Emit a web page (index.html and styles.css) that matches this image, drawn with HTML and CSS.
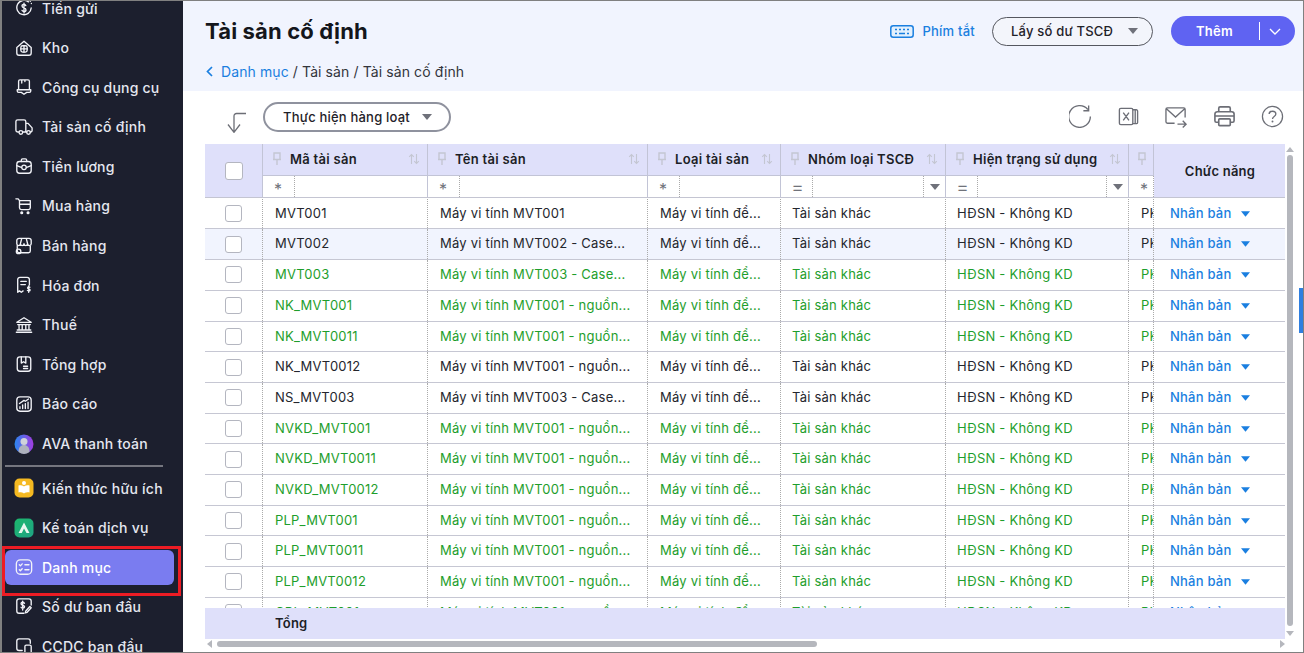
FILE: index.html
```html
<!DOCTYPE html>
<html lang="vi">
<head>
<meta charset="utf-8">
<title>Tài sản cố định</title>
<link rel="stylesheet" href="styles.css">
</head>
<body>
<svg class="defs" width="0" height="0" aria-hidden="true">
  <symbol id="pin" viewBox="0 0 10 14"><path d="M2 1h6v6.500H2zM1 7.500h8M5 8v5" fill="none" stroke="currentColor" stroke-width="1.400"/></symbol>
  <symbol id="sort" viewBox="0 0 12 12"><path d="M3.5 11V1.5M1.2 3.8 3.5 1.5l2.3 2.3M8.5 1v9.5M6.2 8.2l2.3 2.3 2.3-2.3" fill="none" stroke="currentColor" stroke-width="1.1"/></symbol>
  <symbol id="caret" viewBox="0 0 10 6"><path d="M0 0h10L5 6z" fill="currentColor"/></symbol>
</svg>
<div class="window">
  <aside class="sidebar">
    <nav class="menu">
      <a class="item"><svg class="ico" viewBox="0 0 20 20"><path d="M15 3.200A8 8 0 1 0 18 10"/><path d="M17 2.500v.01M18.200 5v.01"/><path d="M12 7.300C11.500 6.500 10.800 6 10 6c-1.200 0-2.200.7-2.200 1.900 0 2.600 4.400 1.500 4.400 4.200 0 1.200-1 1.900-2.200 1.900-.9 0-1.700-.5-2.200-1.300M10 4.500v11"/></svg>Tiền gửi</a>
      <a class="item"><svg class="ico" viewBox="0 0 20 20"><path d="M2 9.500 10 2.500l8 7v6a2.500 2.500 0 0 1-2.500 2.500h-11A2.500 2.500 0 0 1 2 15.500z"/><rect x="6.500" y="7.500" width="7" height="7" rx="2"/><path d="M10 7.500v7M6.500 11h7"/></svg>Kho</a>
      <a class="item"><svg class="ico" viewBox="0 0 20 20"><path d="M4 13V3.500A1.500 1.500 0 0 1 5.500 2h9A1.500 1.500 0 0 1 16 3.500V13M2.500 13h15v1.500a1.500 1.500 0 0 1-1.500 1.500h-3l-3 2-3-2H4a1.500 1.500 0 0 1-1.500-1.500zM7.500 2v3.500M11 2v2"/></svg>Công cụ dụng cụ</a>
      <a class="item"><svg class="ico" viewBox="0 0 20 20"><path d="M4 15.500H3a2 2 0 0 1-2-2V4a2 2 0 0 1 2-2h7a2 2 0 0 1 2 2v11.500H9M12 6h2.500l4.500 5v3a1.500 1.500 0 0 1-1.500 1.500H17M12 15.500h1"/><circle cx="6.500" cy="16" r="2"/><circle cx="15" cy="16" r="2"/></svg>Tài sản cố định</a>
      <a class="item"><svg class="ico" viewBox="0 0 20 20"><rect x="2" y="5" width="16" height="13" rx="3"/><path d="M7 5V3.500A1.500 1.500 0 0 1 8.500 2h3A1.500 1.500 0 0 1 13 3.500V5M2 9.500l5 2M18 9.500l-5 2"/><circle cx="10" cy="11.500" r="2.500"/></svg>Tiền lương</a>
      <a class="item"><svg class="ico" viewBox="0 0 20 20"><path d="M1 2h2.500l1.500 2h12v8a2 2 0 0 1-2 2H7a2 2 0 0 1-2-2V4M5 8h12"/><circle cx="7.500" cy="17.500" r="1" fill="currentColor"/><circle cx="14.500" cy="17.500" r="1" fill="currentColor"/></svg>Mua hàng</a>
      <a class="item"><svg class="ico" viewBox="0 0 20 20"><path d="M2.500 9v6.500a2 2 0 0 0 2 2H15a2 2 0 0 0 2-2V9M4.500 1.500h11A2.500 2.500 0 0 1 18 4v3.500a2 2 0 0 1-4 0 2 2 0 0 1-4 0 2 2 0 0 1-4 0 2 2 0 0 1-4 0V4a2.500 2.500 0 0 1 2.500-2.500zM7.500 1.500 6 7.500M12.500 1.500l1.500 6"/><circle cx="4" cy="16" r="2.500"/></svg>Bán hàng</a>
      <a class="item"><svg class="ico" viewBox="0 0 20 20"><path d="M3 18V4a2.500 2.500 0 0 1 2.500-2.500h8A2.500 2.500 0 0 1 16 4v6M3 18l2-1.500 2 1.500 2-1.500M6.500 6h6M6.500 9.500h5"/><path d="M16.500 12.500c-.5-.5-2.500-.7-2.500.7s2.800.8 2.800 2.300c0 1.400-2.300 1.300-3 .5M15.200 11v7"/></svg>Hóa đơn</a>
      <a class="item"><svg class="ico" viewBox="0 0 20 20"><path d="M2 7 10 2l8 5zM3 9.500h14M4.500 9.500v6M8 9.500v6M12 9.500v6M15.500 9.500v6M2.500 15.500h15M1.500 18h17"/></svg>Thuế</a>
      <a class="item"><svg class="ico" viewBox="0 0 20 20"><rect x="2.500" y="2" width="15" height="16" rx="3"/><path d="M7 2v7l2.500-1.500L12 9V2M9.500 12.500h4.500M9.500 15h4.500"/></svg>Tổng hợp</a>
      <a class="item"><svg class="ico" viewBox="0 0 20 20"><rect x="2" y="2" width="16" height="16" rx="3.500"/><path d="M5.500 15v-2M8.500 15v-4M11.500 15V9.500M14.500 15V8M5 9.500 10 6l1.500 1L15 4.500"/></svg>Báo cáo</a>
      <a class="item"><svg class="ico ico-lg" viewBox="0 0 20 20"><defs><linearGradient id="ava" x1="0" x2="1"><stop offset="0" stop-color="#2a86ef"/><stop offset="1" stop-color="#a23ce0"/></linearGradient></defs><circle cx="10" cy="10" r="9.500" fill="url(#ava)" stroke="none"/><circle cx="10" cy="7.500" r="3.500" fill="#cfd2da" stroke="none"/><path d="M4.500 18c0-5 2.500-7 5.500-7s5.500 2 5.500 7a9.500 9.500 0 0 1-11 0z" fill="#aeb2bd" stroke="none"/></svg>AVA thanh toán</a>
      <hr class="rule">
      <a class="item"><svg class="ico ico-lg" viewBox="0 0 20 20"><rect width="19" height="19" x=".5" y=".5" rx="5" fill="#f5b921" stroke="none"/><path d="M10 8.500C8 7.300 6 7.200 4.500 7.500v7c1.500-.3 3.500-.2 5.500 1 2-1.200 4-1.300 5.500-1v-7c-1.500-.3-3.500-.2-5.500 1z" fill="#fff" stroke="none"/><circle cx="10" cy="5" r="2" fill="#fff" stroke="none"/></svg>Kiến thức hữu ích</a>
      <a class="item"><svg class="ico ico-lg" viewBox="0 0 20 20"><defs><linearGradient id="ktdv" x1="0" x2="1" y2="1"><stop offset="0" stop-color="#1cb86c"/><stop offset="1" stop-color="#1fa384"/></linearGradient></defs><rect width="19" height="19" x=".5" y=".5" rx="5" fill="url(#ktdv)" stroke="none"/><path d="M4.500 15 10 4.500 15.500 15h-3L10 10.500 7.800 15z" fill="#e9f7ef" stroke="none"/></svg>Kế toán dịch vụ</a>
      <a class="item is-active"><svg class="ico" viewBox="0 0 20 20"><rect x="1.500" y="2" width="17" height="16" rx="4.500"/><path d="M4.800 7.500 6 8.700l2-2.200M4.800 13l1.200 1.200 2-2.200M11 7.500h4.500M11 13h4.500"/></svg>Danh mục</a>
      <a class="item"><svg class="ico" viewBox="0 0 20 20"><path d="M18 9V4.500A2.500 2.500 0 0 0 15.500 2h-11A2.500 2.500 0 0 0 2 4.500v11A2.500 2.500 0 0 0 4.500 18H10"/><path d="M10.500 7c-.5-.8-1.100-1.200-1.900-1.200-1.100 0-1.900.6-1.900 1.600 0 2.200 3.900 1.300 3.900 3.500 0 1-.9 1.600-2 1.600-.8 0-1.500-.4-1.900-1.100M8.500 4.500v10M18 12l-4.500 5-2 .5.500-2 4.500-5z"/></svg>Số dư ban đầu</a>
      <a class="item"><svg class="ico" viewBox="0 0 20 20"><path d="M8 15H4.500A2.500 2.500 0 0 1 2 12.500v-8A2.500 2.500 0 0 1 4.500 2h10A2.500 2.500 0 0 1 17 4.500V7M6 18h3"/><rect x="11" y="9" width="7" height="9" rx="1.500"/></svg>CCDC ban đầu</a>
    </nav>
    <div class="mark"></div>
  </aside>

  <main class="main">
    <header class="band">
      <div class="band-top">
        <h1 class="title">Tài sản cố định</h1>
        <div class="actions">
          <a class="shortcut"><svg class="kbd" viewBox="0 0 24 13"><rect x=".8" y=".8" width="22.400" height="11.400" rx="2.500" fill="#e3f0fd" stroke="currentColor" stroke-width="1.500"/><path d="M5 4.500h2M9 4.500h2M13 4.500h2M17 4.500h2M5 8.500h2M9 8.500h6M17 8.500h2" stroke="currentColor" stroke-width="1.300"/></svg>Phím tắt</a>
          <button class="pill pill-dark">Lấy số dư TSCĐ<svg class="caret-sm"><use href="#caret"/></svg></button>
          <div class="add"><span class="add-label">Thêm</span><span class="add-arrow"><svg viewBox="0 0 12 7"><path d="M1 1l5 5 5-5" fill="none" stroke="currentColor" stroke-width="1.300"/></svg></span></div>
        </div>
      </div>
      <div class="crumbs"><svg class="crumb-back" viewBox="0 0 7 11"><path d="M6 1 1.500 5.500 6 10" fill="none" stroke="currentColor" stroke-width="1.700"/></svg><a class="crumb-link">Danh mục</a> / Tài sản / Tài sản cố định</div>
    </header>

    <section class="toolbar">
      <svg class="batch-arrow" viewBox="0 0 20 21"><path d="M19 1.500H9.500A2.500 2.500 0 0 0 7 4v16M1 12.500 7 20.300l6-7.800" fill="none" stroke="currentColor" stroke-width="1.300"/></svg>
      <button class="pill pill-batch">Thực hiện hàng loạt<svg class="caret-sm"><use href="#caret"/></svg></button>
      <div class="tools">
        <svg class="tool" viewBox="1 0 24 24"><path d="M20.660 4.740A11.300 11.300 0 1 0 23.300 12M21.500 .5V6H16" fill="none" stroke="currentColor" stroke-width="1.400"/></svg>
        <svg class="tool" viewBox="0 0 24 24"><rect x="2.500" y="3.500" width="14" height="17" rx="1.500" fill="none" stroke="currentColor" stroke-width="1.400"/><path d="M16.500 5h4A1.200 1.200 0 0 1 21.500 6.200v12a1.200 1.200 0 0 1-1 1.200h-4M19 5v14.500M6.500 8l6 8M12.500 8l-6 8" fill="none" stroke="currentColor" stroke-width="1.400"/></svg>
        <svg class="tool" viewBox="1 0 24 24"><path d="M11 19H3.500A1.500 1.500 0 0 1 2 17.500v-13A1.500 1.500 0 0 1 3.500 3h17A1.500 1.500 0 0 1 22 4.500V13M2.500 4 12 12.500 21.500 4M14 20h9M19.500 16.500 23 20l-3.500 3.500" fill="none" stroke="currentColor" stroke-width="1.400"/></svg>
        <svg class="tool" viewBox="0 0 24 24"><path d="M6 7V3.500A1.500 1.500 0 0 1 7.500 2h9A1.500 1.500 0 0 1 18 3.500V7M6 18H3.500A1.500 1.500 0 0 1 2 16.500v-7A2.500 2.500 0 0 1 4.500 7h15A2.500 2.500 0 0 1 22 9.500v7a1.500 1.500 0 0 1-1.500 1.500H18M2 11.500h20" fill="none" stroke="currentColor" stroke-width="1.700"/><rect x="6" y="14.500" width="12" height="7" rx="1" fill="none" stroke="currentColor" stroke-width="1.700"/></svg>
        <svg class="tool" viewBox="0 0 24 24"><circle cx="12" cy="12" r="10.500" fill="none" stroke="currentColor" stroke-width="1.300"/><path d="M8.500 9.500C8.500 7.500 10 6.500 12 6.500s3.500 1.200 3.500 3c0 2.500-3.500 2.500-3.500 5" fill="none" stroke="currentColor" stroke-width="1.400"/><circle cx="12" cy="17.300" r="1" fill="currentColor"/></svg>
      </div>
    </section>

    <section class="table-area">
      <div class="table">
        <div class="thead">
          <div class="th th-check"><span class="box box-head"></span></div>
          <div class="th"><svg class="pin"><use href="#pin"/></svg><b class="th-label">Mã tài sản</b><svg class="sort"><use href="#sort"/></svg></div>
          <div class="th"><svg class="pin"><use href="#pin"/></svg><b class="th-label">Tên tài sản</b><svg class="sort"><use href="#sort"/></svg></div>
          <div class="th"><svg class="pin"><use href="#pin"/></svg><b class="th-label">Loại tài sản</b><svg class="sort"><use href="#sort"/></svg></div>
          <div class="th"><svg class="pin"><use href="#pin"/></svg><b class="th-label">Nhóm loại TSCĐ</b><svg class="sort"><use href="#sort"/></svg></div>
          <div class="th"><svg class="pin"><use href="#pin"/></svg><b class="th-label">Hiện trạng sử dụng</b><svg class="sort"><use href="#sort"/></svg></div>
          <div class="th th-narrow"><svg class="pin"><use href="#pin"/></svg></div>
          <div class="th th-fn">Chức năng</div>
          <div class="tf"><span class="op">*</span></div>
          <div class="tf"><span class="op">*</span></div>
          <div class="tf"><span class="op">*</span></div>
          <div class="tf"><span class="op op-eq">=</span><span class="tf-fill"></span><span class="tf-drop"><svg class="caret-sm"><use href="#caret"/></svg></span></div>
          <div class="tf"><span class="op op-eq">=</span><span class="tf-fill"></span><span class="tf-drop"><svg class="caret-sm"><use href="#caret"/></svg></span></div>
          <div class="tf tf-narrow"><span class="op">*</span></div>
        </div>
        <div class="tbody">
          <div class="row"><div class="td td-check"><span class="box"></span></div><div class="td">MVT001</div><div class="td">Máy vi tính MVT001</div><div class="td">Máy vi tính để...</div><div class="td td-tight">Tài sản khác</div><div class="td td-tight">HĐSN - Không KD</div><div class="td td-clip">PKT</div><div class="td-fn">Nhân bản<svg class="fn-caret"><use href="#caret"/></svg></div></div>
          <div class="row is-hover"><div class="td td-check"><span class="box"></span></div><div class="td">MVT002</div><div class="td">Máy vi tính MVT002 - Case...</div><div class="td">Máy vi tính để...</div><div class="td td-tight">Tài sản khác</div><div class="td td-tight">HĐSN - Không KD</div><div class="td td-clip">PKT</div><div class="td-fn">Nhân bản<svg class="fn-caret"><use href="#caret"/></svg></div></div>
          <div class="row is-green"><div class="td td-check"><span class="box"></span></div><div class="td">MVT003</div><div class="td">Máy vi tính MVT003 - Case...</div><div class="td">Máy vi tính để...</div><div class="td td-tight">Tài sản khác</div><div class="td td-tight">HĐSN - Không KD</div><div class="td td-clip">PKT</div><div class="td-fn">Nhân bản<svg class="fn-caret"><use href="#caret"/></svg></div></div>
          <div class="row is-green"><div class="td td-check"><span class="box"></span></div><div class="td">NK_MVT001</div><div class="td">Máy vi tính MVT001 - nguồn...</div><div class="td">Máy vi tính để...</div><div class="td td-tight">Tài sản khác</div><div class="td td-tight">HĐSN - Không KD</div><div class="td td-clip">PKT</div><div class="td-fn">Nhân bản<svg class="fn-caret"><use href="#caret"/></svg></div></div>
          <div class="row is-green"><div class="td td-check"><span class="box"></span></div><div class="td">NK_MVT0011</div><div class="td">Máy vi tính MVT001 - nguồn...</div><div class="td">Máy vi tính để...</div><div class="td td-tight">Tài sản khác</div><div class="td td-tight">HĐSN - Không KD</div><div class="td td-clip">PKT</div><div class="td-fn">Nhân bản<svg class="fn-caret"><use href="#caret"/></svg></div></div>
          <div class="row"><div class="td td-check"><span class="box"></span></div><div class="td">NK_MVT0012</div><div class="td">Máy vi tính MVT001 - nguồn...</div><div class="td">Máy vi tính để...</div><div class="td td-tight">Tài sản khác</div><div class="td td-tight">HĐSN - Không KD</div><div class="td td-clip">PKT</div><div class="td-fn">Nhân bản<svg class="fn-caret"><use href="#caret"/></svg></div></div>
          <div class="row"><div class="td td-check"><span class="box"></span></div><div class="td">NS_MVT003</div><div class="td">Máy vi tính MVT003 - Case...</div><div class="td">Máy vi tính để...</div><div class="td td-tight">Tài sản khác</div><div class="td td-tight">HĐSN - Không KD</div><div class="td td-clip">PKT</div><div class="td-fn">Nhân bản<svg class="fn-caret"><use href="#caret"/></svg></div></div>
          <div class="row is-green"><div class="td td-check"><span class="box"></span></div><div class="td">NVKD_MVT001</div><div class="td">Máy vi tính MVT001 - nguồn...</div><div class="td">Máy vi tính để...</div><div class="td td-tight">Tài sản khác</div><div class="td td-tight">HĐSN - Không KD</div><div class="td td-clip">PKT</div><div class="td-fn">Nhân bản<svg class="fn-caret"><use href="#caret"/></svg></div></div>
          <div class="row is-green"><div class="td td-check"><span class="box"></span></div><div class="td">NVKD_MVT0011</div><div class="td">Máy vi tính MVT001 - nguồn...</div><div class="td">Máy vi tính để...</div><div class="td td-tight">Tài sản khác</div><div class="td td-tight">HĐSN - Không KD</div><div class="td td-clip">PKT</div><div class="td-fn">Nhân bản<svg class="fn-caret"><use href="#caret"/></svg></div></div>
          <div class="row is-green"><div class="td td-check"><span class="box"></span></div><div class="td">NVKD_MVT0012</div><div class="td">Máy vi tính MVT001 - nguồn...</div><div class="td">Máy vi tính để...</div><div class="td td-tight">Tài sản khác</div><div class="td td-tight">HĐSN - Không KD</div><div class="td td-clip">PKT</div><div class="td-fn">Nhân bản<svg class="fn-caret"><use href="#caret"/></svg></div></div>
          <div class="row is-green"><div class="td td-check"><span class="box"></span></div><div class="td">PLP_MVT001</div><div class="td">Máy vi tính MVT001 - nguồn...</div><div class="td">Máy vi tính để...</div><div class="td td-tight">Tài sản khác</div><div class="td td-tight">HĐSN - Không KD</div><div class="td td-clip">PKT</div><div class="td-fn">Nhân bản<svg class="fn-caret"><use href="#caret"/></svg></div></div>
          <div class="row is-green"><div class="td td-check"><span class="box"></span></div><div class="td">PLP_MVT0011</div><div class="td">Máy vi tính MVT001 - nguồn...</div><div class="td">Máy vi tính để...</div><div class="td td-tight">Tài sản khác</div><div class="td td-tight">HĐSN - Không KD</div><div class="td td-clip">PKT</div><div class="td-fn">Nhân bản<svg class="fn-caret"><use href="#caret"/></svg></div></div>
          <div class="row is-green"><div class="td td-check"><span class="box"></span></div><div class="td">PLP_MVT0012</div><div class="td">Máy vi tính MVT001 - nguồn...</div><div class="td">Máy vi tính để...</div><div class="td td-tight">Tài sản khác</div><div class="td td-tight">HĐSN - Không KD</div><div class="td td-clip">PKT</div><div class="td-fn">Nhân bản<svg class="fn-caret"><use href="#caret"/></svg></div></div>
          <div class="row is-green"><div class="td td-check"><span class="box"></span></div><div class="td">CBL_MVT001</div><div class="td">Máy vi tính MVT001 - nguồn...</div><div class="td">Máy vi tính để...</div><div class="td td-tight">Tài sản khác</div><div class="td td-tight">HĐSN - Không KD</div><div class="td td-clip">PKT</div><div class="td-fn">Nhân bản<svg class="fn-caret"><use href="#caret"/></svg></div></div>
        </div>
        <div class="tfoot"><b class="tfoot-label">Tổng</b></div>
      </div>
      <div class="vscroll">
        <svg class="sb-arrow" viewBox="0 0 8 5"><path d="M4 0l4 5H0z" fill="currentColor"/></svg>
        <div class="vthumb"></div>
        <svg class="sb-arrow" viewBox="0 0 8 5"><path d="M0 0h8L4 5z" fill="currentColor"/></svg>
      </div>
    </section>
    <div class="hscroll">
      <svg class="sb-arrow-h" viewBox="0 0 5 8"><path d="M5 0v8L0 4z" fill="currentColor"/></svg>
      <div class="htrack"><div class="hthumb"></div></div>
      <svg class="sb-arrow-h" viewBox="0 0 5 8"><path d="M0 0v8l5-4z" fill="currentColor"/></svg>
    </div>
    <div class="edge-tab"></div>
  </main>
</div>
</body>
</html>
```
FILE: styles.css
```css
* { box-sizing: border-box; }
html, body { margin: 0; height: 100%; overflow: hidden; }
body { font-family: Inter, "Noto Sans", sans-serif; font-size: 13px; letter-spacing: .22px; color: #1f2229; background: #fff; }
.defs { position: absolute; }

.window {
  display: flex;
  width: 1304px;
  height: 653px;
  border: solid #808080;
  border-width: 1px 1px 1px 2px;
  background: #fff;
  overflow: hidden;
}

/* sidebar */
.sidebar { position: relative; flex: 0 0 181px; background: #1c1f2e; overflow: hidden; }
.menu { margin-top: -12.8px; padding: 0 0 0 3px; display: flex; flex-direction: column; }
.item {
  display: flex;
  align-items: center;
  gap: 9px;
  height: 39.6px;
  flex: none;
  width: 169px;
  padding-left: 10px;
  color: #e5e7f0;
  font-size: 14px;
  font-weight: 500;
  white-space: nowrap;
}
.ico { flex: none; width: 18px; height: 18px; fill: none; stroke: currentColor; stroke-width: 1.500; stroke-linecap: round; stroke-linejoin: round; color: #f2f3f8; }
.ico-lg { width: 20px; height: 20px; margin-left: -1px; margin-right: -1px; }
.rule { flex: none; width: 158px; height: 2px; margin: 1.200px 0 1.800px; border: 0; background: #75767f; }
.item.is-active { height: 35px; margin: 2.300px 0 1.900px; background: #7a7cf0; border-radius: 6px; color: #fff; }
.mark { position: absolute; left: 0; top: 545px; width: 179px; height: 50px; border: 3px solid #ed1c24; }

/* header band */
.main { position: relative; flex: 1; min-width: 0; display: flex; flex-direction: column; background: #fff; }
.band { flex: 0 0 90px; padding: 15px 8px 0 22px; background: #f1f4fe; }
.band-top { display: flex; align-items: center; justify-content: space-between; height: 30px; }
.title { margin: 0; font-size: 22px; font-weight: 700; letter-spacing: .15px; color: #14161c; line-height: 30px; }
.actions { display: flex; align-items: center; }
.shortcut { display: flex; align-items: center; gap: 8px; margin-right: 17px; color: #1a7fe0; font-weight: 500; }
.kbd { width: 24px; height: 13px; }
.pill {
  display: flex;
  align-items: center;
  justify-content: space-between;
  font: 500 13px Inter, sans-serif;
  letter-spacing: .2px;
  color: #1f2229;
  background: transparent;
  cursor: pointer;
}
.pill-dark { width: 161px; height: 29px; margin-right: 18px; padding: 0 14px 0 18px; border: 1px solid #55575f; border-radius: 15px; background: #f3f5fb; }
.caret-sm { width: 10px; height: 6px; color: #6f717a; }
.add { display: flex; align-items: center; width: 124px; height: 30px; background: #5f63f2; border-radius: 15px; color: #fff; font-weight: 600; }
.add-label { flex: 0 0 88px; padding-left: 25px; }
.add-arrow { display: flex; align-items: center; height: 18px; padding-left: 9px; border-left: 1px solid #fff; }
.add-arrow svg { width: 12px; height: 7px; }
.crumbs { display: flex; align-items: center; margin-top: 17px; font-size: 14px; letter-spacing: .1px; color: #33353c; white-space: pre; }
.crumb-back { width: 7px; height: 11px; margin: 0 8px 0 1px; color: #1a7fe0; }
.crumb-link { color: #1a7fe0; }

/* toolbar */
.toolbar { flex: 0 0 53px; display: flex; align-items: flex-start; padding: 11px 19px 0 44px; }
.batch-arrow { width: 20px; height: 21px; margin-top: 10px; color: #6c6e76; }
.pill-batch { width: 188px; height: 30px; margin-left: 16px; padding: 0 17px 0 18px; border: 2px solid #8f929e; border-radius: 15px; }
.tools { margin-left: auto; display: flex; gap: 25px; margin-top: 3px; }
.tool { width: 23px; height: 23px; color: #6c6e76; }

/* table */
.table-area { flex: 0 0 495px; min-height: 0; display: flex; padding-left: 22px; }
.table { flex: 0 0 1080px; display: flex; flex-direction: column; overflow: hidden; }
.thead {
  flex: 0 0 54px;
  display: grid;
  grid-template-columns: 58px 165px 220px 133px 165px 183px 25px 131px;
  grid-template-rows: 32px 21px;
  background: #dfe0fa;
  border-bottom: 1.500px solid #c4c5d2;
}
.th {
  display: flex;
  align-items: center;
  padding: 0 7px 1px 9px;
  border-right: 1.500px solid #c2c4d6;
  border-bottom: 1.500px solid #c2c4d6;
  color: #1c1e26;
  white-space: nowrap;
}
.th-check { grid-row: 1 / 3; justify-content: center; padding: 1px 0 0 0; border-bottom: 0; }
.th-narrow { padding-left: 8px; }
.th-fn { grid-row: 1 / 3; grid-column: 8; justify-content: center; padding: 0 0 0 1px; border: 0; font-weight: 600; }
.pin { flex: none; width: 10px; height: 14px; color: #c4c6d2; }
.th-label { margin-left: 8px; font-weight: 600; letter-spacing: .28px; flex: 1; }
.sort { flex: none; width: 12px; height: 12px; color: #c4c6d2; }
.tf { display: flex; align-items: center; background: #fff; border-right: 1.500px solid #c2c4d6; }
.tf-narrow { border-right: 1px dotted #aaa; }
.op { flex: none; display: block; width: 32px; height: 100%; padding-left: 11px; border-right: 1px dotted #aaa; color: #70727a; font-size: 16px; line-height: 27px; overflow: hidden; }
.op-eq { font-size: 20px; font-weight: 300; line-height: 22px; padding-left: 10px; }
.tf-narrow .op { border: 0; }
.tf-fill { flex: 1; }
.tf-drop { flex: 0 0 22px; height: 100%; display: flex; align-items: center; justify-content: center; border-left: 1px dotted #aaa; }

.tbody { flex: 1; min-height: 0; padding-top: 1px; overflow: hidden; }
.row {
  display: grid;
  grid-template-columns: 58px 165px 220px 133px 165px 183px 25px 131px;
  height: 30.680px;
  border-bottom: 1.500px solid #c6c7d3;
  color: #24262d;
}
.row:first-child { margin-top: -.2px; }
.row.is-green { color: #1e9e2c; }
.row.is-hover { background: #f1f4fe; }
.td {
  display: block;
  padding: 0 4px 0 12px;
  line-height: 29px;
  border-right: 1px dotted #aaa;
  white-space: nowrap;
  overflow: hidden;
}
.td-check { display: flex; align-items: center; justify-content: flex-start; padding-left: 20px; }
.td-tight { padding-left: 11px; }
.td-clip { padding-right: 0; }
.td-fn { display: block; line-height: 29px; padding-left: 16px; color: #1a7fe0; font-weight: 500; white-space: nowrap; }
.fn-caret { display: inline-block; width: 9px; height: 6px; margin-left: 10px; vertical-align: 1px; }
.box { display: block; width: 17px; height: 17px; border: 1px solid #b4b6c0; border-radius: 3px; background: #fff; }
.box-head { width: 18px; height: 18px; }
.tfoot { flex: 0 0 31px; display: flex; align-items: center; padding: 0 0 1px 70px; background: #dfe0fa; }
.tfoot-label { font-weight: 600; color: #1c1e26; }

/* scrollbars */
.vscroll { flex: 0 0 12px; display: flex; flex-direction: column; align-items: center; padding: 3px 4px 3px 0; margin-left: 1px; color: #b5b7bd; }
.sb-arrow { flex: none; width: 8px; height: 5px; }
.vthumb { flex: 1; width: 6px; margin: 3px 0 5px; background: #b5b7bd; border-radius: 3px; }
.hscroll { display: flex; align-items: center; width: 1080px; height: 10px; margin-left: 22px; color: #b5b7bd; }
.sb-arrow-h { flex: none; width: 5px; height: 8px; margin-left: 2px; }
.htrack { flex: 1; padding: 0 3px 0 5px; }
.hthumb { width: 600px; height: 6px; background: #b5b7bd; border-radius: 3px; }
.edge-tab { position: absolute; right: -1px; top: 287px; width: 5px; height: 45px; background: #2f7fe0; }
```
